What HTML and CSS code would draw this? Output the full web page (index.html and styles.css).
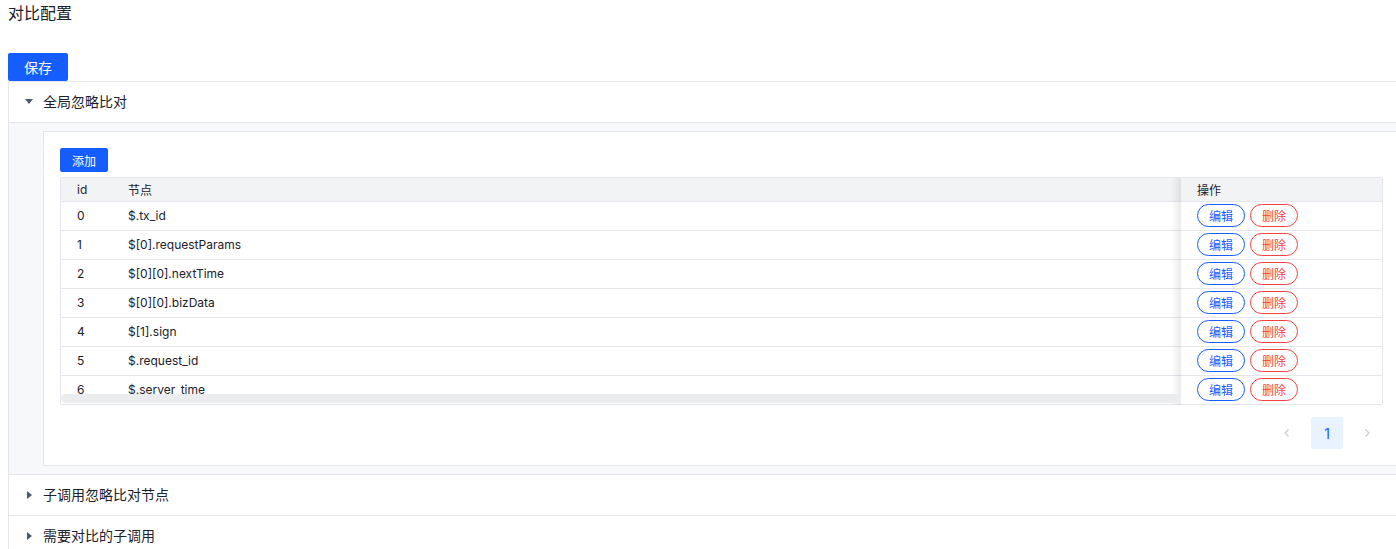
FILE: index.html
```html
<!DOCTYPE html>
<html lang="zh">
<head>
<meta charset="utf-8">
<title>对比配置</title>
<link rel="stylesheet" href="styles.css">
</head>
<body>
<div class="page">
  <div class="title">对比配置</div>
  <button class="btn btn-save">保存</button>
  <div class="collapse">
    <div class="panel">
      <div class="panel-header"><span class="caret caret-down"></span><span>全局忽略比对</span></div>
      <div class="panel-content">
        <div class="card">
          <button class="btn btn-add">添加</button>
          <div class="table">
            <div class="tr th">
              <div class="td c-id">id</div>
              <div class="td c-node">节点</div>
              <div class="td c-op">操作</div>
            </div>
            <div class="tr">
              <div class="td c-id">0</div>
              <div class="td c-node">$.tx_id</div>
              <div class="td c-op"><button class="pill pill-edit">编辑</button><button class="pill pill-del">删除</button></div>
            </div>
            <div class="tr">
              <div class="td c-id">1</div>
              <div class="td c-node">$[0].requestParams</div>
              <div class="td c-op"><button class="pill pill-edit">编辑</button><button class="pill pill-del">删除</button></div>
            </div>
            <div class="tr">
              <div class="td c-id">2</div>
              <div class="td c-node">$[0][0].nextTime</div>
              <div class="td c-op"><button class="pill pill-edit">编辑</button><button class="pill pill-del">删除</button></div>
            </div>
            <div class="tr">
              <div class="td c-id">3</div>
              <div class="td c-node">$[0][0].bizData</div>
              <div class="td c-op"><button class="pill pill-edit">编辑</button><button class="pill pill-del">删除</button></div>
            </div>
            <div class="tr">
              <div class="td c-id">4</div>
              <div class="td c-node">$[1].sign</div>
              <div class="td c-op"><button class="pill pill-edit">编辑</button><button class="pill pill-del">删除</button></div>
            </div>
            <div class="tr">
              <div class="td c-id">5</div>
              <div class="td c-node">$.request_id</div>
              <div class="td c-op"><button class="pill pill-edit">编辑</button><button class="pill pill-del">删除</button></div>
            </div>
            <div class="tr tr-last">
              <div class="td c-id">6</div>
              <div class="td c-node">$.server_time</div>
              <div class="td c-op"><button class="pill pill-edit">编辑</button><button class="pill pill-del">删除</button></div>
              <div class="hscroll"></div>
            </div>
          </div>
          <div class="pager">
            <span class="pg pg-arrow"><svg width="12" height="12" viewBox="0 0 12 12"><path d="M7.5 2.5 4 6l3.5 3.5" fill="none" stroke="#c9cdd4" stroke-width="1.2"/></svg></span>
            <span class="pg pg-active">1</span>
            <span class="pg pg-arrow"><svg width="12" height="12" viewBox="0 0 12 12"><path d="M4.5 2.5 8 6l-3.5 3.5" fill="none" stroke="#c9cdd4" stroke-width="1.2"/></svg></span>
          </div>
        </div>
      </div>
    </div>
    <div class="panel">
      <div class="panel-header"><span class="caret caret-right"></span><span>子调用忽略比对节点</span></div>
    </div>
    <div class="panel">
      <div class="panel-header"><span class="caret caret-right"></span><span>需要对比的子调用</span></div>
    </div>
  </div>
</div>
</body>
</html>
```
FILE: styles.css
```css
html, body {
  margin: 0;
  padding: 0;
  overflow: hidden;
  background: #fff;
}
body {
  font-family: Inter, "Noto Sans CJK SC", sans-serif;
  color: #1d2129;
}
.page {
  padding: 1px 8px 0;
}
.title {
  font-size: 16px;
  line-height: 24px;
  height: 24px;
  margin-bottom: 28px;
}
.btn {
  border: none;
  background: #165dff;
  color: #fff;
  font-family: Inter, "Noto Sans CJK SC", sans-serif;
  border-radius: 2px;
  padding: 0;
  display: block;
}
.btn-save {
  width: 60px;
  height: 28px;
  font-size: 14px;
}
.collapse {
  width: 1427px;
  box-sizing: border-box;
  border-left: 1px solid #e5e6eb;
  border-top: 1px solid #e5e6eb;
}
.panel-header {
  display: flex;
  align-items: center;
  font-size: 14px;
  line-height: 20px;
  padding-bottom: 1px;
  box-sizing: border-box;
  height: 41px;
  border-bottom: 1px solid #e5e6eb;
}
.caret {
  width: 0;
  height: 0;
}
.caret-down {
  border-left: 4px solid transparent;
  border-right: 4px solid transparent;
  border-top: 5px solid #4e5969;
  margin-left: 16px;
  margin-right: 10px;
}
.caret-right {
  border-top: 4px solid transparent;
  border-bottom: 4px solid transparent;
  border-left: 5px solid #4e5969;
  margin-left: 18px;
  margin-right: 11px;
}
.panel-content {
  background: #f7f8fa;
  padding: 8px 34px 8px 34px;
  border-bottom: 1px solid #e5e6eb;
}
.card {
  background: #fff;
  border: 1px solid #e5e6eb;
  padding: 16px 16px 16px;
}
.btn-add {
  width: 48px;
  height: 24px;
  font-size: 12px;
  margin-bottom: 5px;
}
.table {
  border: 1px solid #e5e6eb;
  border-radius: 2px;
  width: 1323px;
  box-sizing: border-box;
  font-size: 12px;
}
.tr {
  display: grid;
  grid-template-columns: 51px 1fr 201px;
  height: 28px;
  border-bottom: 1px solid #e5e6eb;
  position: relative;
}
.tr-last {
  border-bottom: none;
}
.th {
  height: 23px;
  background: #f2f3f5;
}
.td {
  display: flex;
  align-items: center;
  padding-left: 16px;
  padding-bottom: 1px;
}
.c-op {
  gap: 5px;
  position: relative;
  padding-left: 16px;
}
.th .c-op {
  background: #f2f3f5;
}
.c-op::before {
  content: "";
  position: absolute;
  left: -10px;
  top: 0;
  bottom: -1px;
  width: 10px;
  background: linear-gradient(to left, rgba(0,0,0,0.08), rgba(0,0,0,0));
}
.pill {
  width: 48px;
  height: 23px;
  border-radius: 12px;
  background: #fff;
  font-size: 12px;
  font-family: Inter, "Noto Sans CJK SC", sans-serif;
  padding: 0;
}
.pill-edit {
  border: 1px solid #165dff;
  color: #165dff;
}
.pill-del {
  border: 1px solid #f53f3f;
  color: #f53f3f;
}
.hscroll {
  position: absolute;
  left: 0;
  width: 1119px;
  bottom: 1px;
  height: 9px;
  border-radius: 5px;
  background: #ebeced;
}
.pager {
  display: flex;
  justify-content: flex-end;
  gap: 8px;
  margin-top: 12px;
  width: 1323px;
}
.pg {
  width: 32px;
  height: 32px;
  display: flex;
  align-items: center;
  justify-content: center;
  font-size: 14px;
  border-radius: 2px;
}
.pg-active {
  background: #e8f3ff;
  color: #165dff;
}
```
